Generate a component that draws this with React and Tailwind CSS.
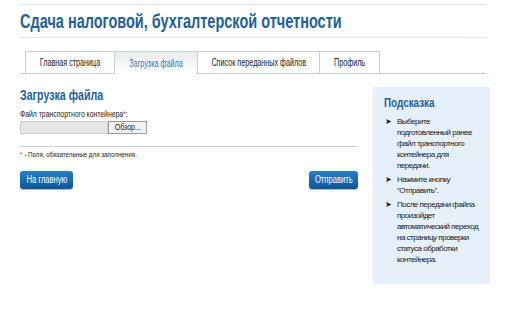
function Narrow({ children, className = 'scale-x-[0.72]', origin = 'origin-left' }) {
  return <span className={`inline-block whitespace-nowrap ${className} ${origin}`}>{children}</span>;
}

export default function App() {
  const tabs = [
    { label: 'Главная страница', w: 'w-[90px]' },
    { label: 'Загрузка файла', w: 'w-[83px]', active: true },
    { label: 'Список переданных файлов', w: 'w-[122px]' },
    { label: 'Профиль', w: 'w-[60px]' },
  ];
  const hints = [
    'Выберите подготовленный ранее файл транспортного контейнера для передачи.',
    'Нажмите кнопку "Отправить".',
    'После передачи файла произойдет автоматический переход на страницу проверки статуса обработки контейнера.',
  ];

  return (
    <div className="w-[527px] h-[314px] bg-white overflow-hidden font-['Liberation_Sans',Arial,sans-serif]">
      <div className="ml-[20px] w-[466px] pt-[4px]">
        <div className="border-t border-[#dde4e8]"></div>
        <h1 className="h-[32px] flex items-center text-[20px] font-bold text-[#1f5f9c] leading-none">
          <Narrow className="scale-x-[0.725]">Сдача налоговой, бухгалтерской отчетности</Narrow>
        </h1>
        <div className="border-t border-[#dde4e8]"></div>

        {/* tabs */}
        <div className="mt-[13px] flex items-start pl-[5px] border-b border-[#c3d2da] h-[23px]">
          {tabs.map((t, i) => (
            <div
              key={i}
              className={`${t.w} flex items-center justify-center text-[10px] border-t border-r border-[#c3d2da] ${
                i === 0 ? 'border-l' : ''
              } ${
                t.active
                  ? 'h-[23px] bg-gradient-to-b from-[#eaeced] to-white text-[#3a78b5]'
                  : 'h-[22px] bg-white text-[#222]'
              }`}
            >
              <Narrow origin="origin-center">{t.label}</Narrow>
            </div>
          ))}
        </div>
      </div>

      <div className="flex ml-[20px] mt-[13px]">
        {/* main form */}
        <div className="w-[338px]">
          <h2 className="text-[15px] font-bold text-[#1f5f9c] leading-[16px] h-[17px]">
            <Narrow className="scale-x-[0.71]">Загрузка файла</Narrow>
          </h2>
          <div className="mt-[5px] text-[9px] leading-[10px] text-[#222]">
            <Narrow className="scale-x-[0.76]">
              Файл транспортного контейнера<span className="text-[#e03030]">*</span>:
            </Narrow>
          </div>
          <div className="mt-[2px] flex h-[13px]">
            <div className="w-[88px] bg-[#e6e6e6] border border-[#cfcfcf]"></div>
            <div className="w-[39px] bg-[#f2f2f2] border border-[#9a9a9a] text-[9px] leading-[11px] text-center text-[#222]">
              <Narrow origin="origin-center" className="scale-x-[0.78]">Обзор...</Narrow>
            </div>
          </div>
          <div className="mt-[12px] border-t border-[#c3d2da]"></div>
          <div className="mt-[3px] text-[8px] leading-[10px] text-[#222]">
            <Narrow className="scale-x-[0.78]">
              <span className="text-[#e03030]">*</span> - Поля, обязательные для заполнения.
            </Narrow>
          </div>
          <div className="mt-[11px] flex justify-between">
            <button className="w-[53px] h-[18px] rounded-[3px] bg-gradient-to-b from-[#2580cc] to-[#0c5597] text-white text-[10px] leading-none shadow-[0_1px_1px_rgba(0,0,0,0.3)]">
              <Narrow origin="origin-center" className="scale-x-[0.76]">На главную</Narrow>
            </button>
            <button className="w-[49px] h-[18px] rounded-[3px] bg-gradient-to-b from-[#2580cc] to-[#0c5597] text-white text-[10px] leading-none shadow-[0_1px_1px_rgba(0,0,0,0.3)]">
              <Narrow origin="origin-center" className="scale-x-[0.76]">Отправить</Narrow>
            </button>
          </div>
        </div>

        {/* hint sidebar */}
        <div className="ml-[15px] w-[117px] h-[197px] bg-[#e6f0fb] pl-[11px] pt-[9px]">
          <div className="text-[13px] font-bold text-[#1f5f9c] leading-[14px]">
            <Narrow className="scale-x-[0.76]">Подсказка</Narrow>
          </div>
          <ul className="mt-[6px] pl-[1px]">
            {hints.map((h, i) => (
              <li key={i} className="flex mb-[3px]">
                <span className="w-[12px] shrink-0 text-[8px] leading-[11px] text-[#111]">➤</span>
                <span className="w-[82px] text-[8px] leading-[11px] tracking-[-0.5px] text-[#1a1a1a]">{h}</span>
              </li>
            ))}
          </ul>
        </div>
      </div>
    </div>
  );
}
